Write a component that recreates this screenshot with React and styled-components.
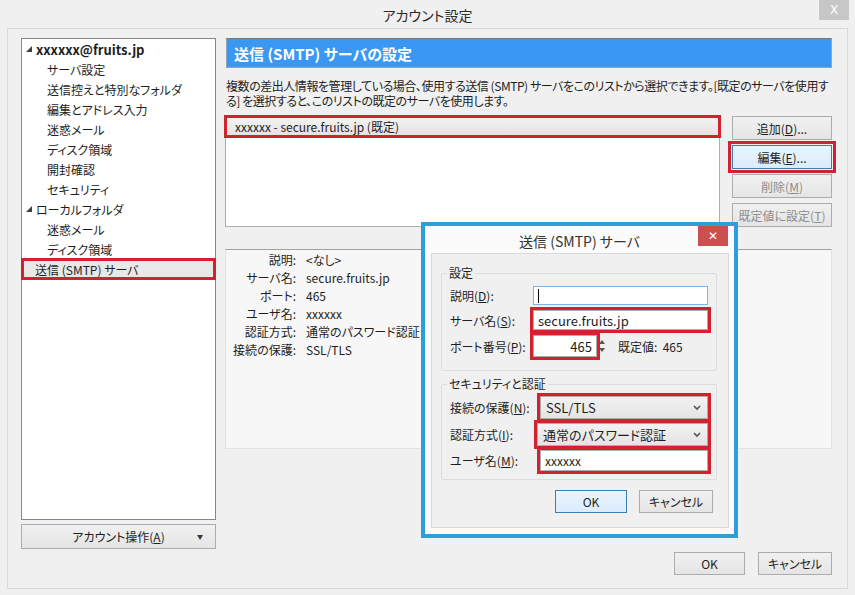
import styled, { createGlobalStyle } from "styled-components";

const GlobalStyle = createGlobalStyle`
  html, body {
    margin: 0;
    padding: 0;
    background: #f0f0f0;
  }
  body {
    font-family: "Noto Sans CJK JP", "Noto Sans", sans-serif;
    font-size: 12px;
    color: #1e1e1e;
    font-feature-settings: "palt";
  }
  * { box-sizing: border-box; }
`;

const RED = "#d3222f";

const Window = styled.div`
  position: relative;
  width: 855px;
  height: 595px;
  background: #f0f0f0;
  display: flex;
  flex-direction: column;
  overflow: hidden;
`;

const TitleBar = styled.div`
  height: 28px;
  display: grid;
  grid-template-columns: 1fr auto 1fr;
  align-items: center;
`;

const WindowTitle = styled.div`
  font-size: 14px;
  color: #2b2b2b;
  padding-top: 2px;
`;

const CloseBox = styled.div`
  justify-self: end;
  align-self: start;
  width: 30px;
  height: 20px;
  margin-right: 6px;
  background: ${(p) => (p.$red ? "#c9504f" : "#c7c7c7")};
  color: #fff;
  display: flex;
  align-items: center;
  justify-content: center;
  font-size: 12px;
  font-family: "DejaVu Sans", sans-serif;
`;

const Frame = styled.div`
  flex: 1;
  margin: 0 7px 6px 7px;
  border: 1px solid #dadada;
  display: flex;
  gap: 10px;
  padding: 9px 15px 13px 13px;
`;

const LeftCol = styled.div`
  width: 195px;
  display: flex;
  flex-direction: column;
  gap: 4px;
  padding-bottom: 26px;
`;

const Tree = styled.div`
  flex: 1;
  background: #fff;
  border: 1px solid #828790;
`;

const TreeItem = styled.div`
  height: 20px;
  display: flex;
  align-items: center;
  padding-left: ${(p) => (p.$child ? "25px" : "4px")};
  font-weight: ${(p) => (p.$bold ? 700 : 400)};
  font-size: ${(p) => (p.$bold ? "13px" : "12px")};
  background: ${(p) => (p.$selected ? "#e8e8e8" : "transparent")};
  outline: ${(p) => (p.$selected ? `3px solid ${RED}` : "none")};
  outline-offset: -2px;
  gap: 4px;
  ${(p) => p.$selected && "padding-left: 13px;"}
`;

const Arrow = () => (
  <svg width="6" height="6" viewBox="0 0 6 6">
    <polygon points="6,0 6,6 0,6" fill="#404040" />
  </svg>
);

const Button = styled.div`
  height: ${(p) => p.$h || 24}px;
  width: ${(p) => (p.$w ? `${p.$w}px` : "auto")};
  border: 1px solid ${(p) => (p.$focus ? "#3c7fb1" : "#acacac")};
  background: ${(p) =>
    p.$focus
      ? "linear-gradient(#eaf4fc, #dcecfc)"
      : "linear-gradient(#f0f0f0, #e5e5e5)"};
  color: ${(p) => (p.$disabled ? "#8d8d8d" : "#1e1e1e")};
  display: flex;
  align-items: center;
  justify-content: center;
  font-size: 12px;
  position: relative;
  outline: ${(p) => (p.$mark ? `3px solid ${RED}` : "none")};
  outline-offset: 1px;
`;

const DropMark = styled.span`
  position: absolute;
  right: 12px;
  top: 7px;
  font-size: 6px;
  color: #333;
`;

const RightCol = styled.div`
  flex: 1;
  display: flex;
  flex-direction: column;
`;

const Header = styled.div`
  height: 30px;
  background: #3a98f2;
  border: 1px solid #8fa6bb;
  border-top-color: #7a7a7a;
  color: #fff;
  font-weight: 700;
  font-size: 15px;
  display: flex;
  align-items: center;
  padding-left: 7px;
`;

const Description = styled.p`
  margin: 10px 0 0 0;
  line-height: 15px;
  font-size: 12px;
  letter-spacing: -0.45px;
`;

const ListRow = styled.div`
  margin-top: 8px;
  display: flex;
  gap: 12px;
`;

const ServerList = styled.div`
  flex: 1;
  height: 111px;
  background: #fff;
  border: 1px solid #adadad;
  margin-left: -1px;
`;

const ServerItem = styled.div`
  height: 19px;
  display: flex;
  align-items: center;
  padding-left: 9px;
  background: linear-gradient(#f4f4f4, #e2e2e2);
  outline: 3px solid ${RED};
  outline-offset: -1px;
`;

const ButtonStack = styled.div`
  width: 100px;
  display: flex;
  flex-direction: column;
  gap: 5px;
`;

const Details = styled.div`
  margin-top: 22px;
  margin-left: -1px;
  height: 200px;
  background: #f7f7f7;
  border-top: 1px solid #a0a0a0;
  border-left: 1px solid #e3e3e3;
  border-right: 1px solid #e3e3e3;
  border-bottom: 1px solid #e3e3e3;
  display: grid;
  grid-template-columns: 70px 1fr;
  grid-auto-rows: 18px;
  column-gap: 10px;
  padding-top: 1px;
  align-content: start;
`;

const DLabel = styled.div`
  text-align: right;
  line-height: 18px;
`;

const DValue = styled.div`
  line-height: 18px;
`;

const Footer = styled.div`
  margin-top: auto;
  display: flex;
  justify-content: flex-end;
  gap: 13px;
`;

/* ---- modal ---- */

const Modal = styled.div`
  position: absolute;
  left: 421px;
  top: 222px;
  width: 317px;
  height: 316px;
  border: 4px solid #2ba0d8;
  background: #fbfbfb;
  display: flex;
  flex-direction: column;
`;

const ModalTitleBar = styled.div`
  height: 27px;
  display: grid;
  grid-template-columns: 1fr auto 1fr;
  align-items: center;
`;

const ModalTitle = styled.div`
  font-size: 14px;
  color: #333;
  padding-top: 2px;
`;

const ModalBody = styled.div`
  flex: 1;
  margin: 0 5px 6px 6px;
  background: #f0f0f0;
  border: 1px solid #dadada;
  padding: 12px 11px 0 9px;
  display: flex;
  flex-direction: column;
`;

const Group = styled.fieldset`
  margin: 0;
  border: 1px solid #dcdcdc;
  border-radius: 2px;
  padding: ${(p) => p.$pad};
  display: grid;
  grid-template-columns: ${(p) => p.$label}px 1fr;
  align-items: center;
  row-gap: ${(p) => p.$gap}px;
  & + & {
    margin-top: 6px;
  }
`;

const Legend = styled.legend`
  padding: 0 2px;
  margin-left: -3px;
  font-size: 12px;
  line-height: 14px;
`;

const FieldLabel = styled.label`
  font-size: 12px;
`;

const TextBox = styled.div`
  height: ${(p) => p.$h || 19}px;
  width: ${(p) => (p.$w ? `${p.$w}px` : "auto")};
  background: #fff;
  border: 1px solid ${(p) => (p.$focus ? "#7eb4ea" : "#abadb3")};
  display: flex;
  align-items: center;
  justify-content: ${(p) => (p.$right ? "flex-end" : "flex-start")};
  padding: 0 4px;
  font-size: ${(p) => (p.$big ? "13px" : "12px")};
  outline: ${(p) => (p.$mark ? `3px solid ${RED}` : "none")};
  outline-offset: 0px;
`;

const Caret = styled.span`
  width: 1px;
  height: 14px;
  background: #000;
`;

const PortRow = styled.div`
  display: flex;
  align-items: center;
`;

const Spinner = () => (
  <svg width="8" height="20" viewBox="0 0 8 20" style={{ marginLeft: 1 }}>
    <polygon points="4,4 7,8 1,8" fill="#555" />
    <polygon points="1,12 7,12 4,16" fill="#555" />
  </svg>
);

const DefaultPort = styled.span`
  margin-left: 12px;
  font-size: 12px;
`;

const Select = styled.div`
  height: 23px;
  background: linear-gradient(#f2f2f2, #e4e4e4);
  border: 1px solid #acacac;
  display: flex;
  align-items: center;
  justify-content: space-between;
  padding: 0 6px 0 5px;
  font-size: 13px;
  outline: 3px solid ${RED};
  outline-offset: 0px;
  margin-left: ${(p) => (p.$shift ? "-3px" : "0")};
`;

const Chevron = () => (
  <svg width="8" height="6" viewBox="0 0 8 6">
    <polyline points="1,1 4,4 7,1" fill="none" stroke="#555" strokeWidth="1.6" />
  </svg>
);

const ModalButtons = styled.div`
  margin-top: 10px;
  display: flex;
  justify-content: flex-end;
  gap: 12px;
  padding-right: 4px;
`;

const details = [
  ["説明:", "<なし>"],
  ["サーバ名:", "secure.fruits.jp"],
  ["ポート:", "465"],
  ["ユーザ名:", "xxxxxx"],
  ["認証方式:", "通常のパスワード認証"],
  ["接続の保護:", "SSL/TLS"],
];

export default function App() {
  return (
    <Window>
      <GlobalStyle />
      <TitleBar>
        <span />
        <WindowTitle>アカウント設定</WindowTitle>
        <CloseBox>X</CloseBox>
      </TitleBar>
      <Frame>
        <LeftCol>
          <Tree>
            <TreeItem $bold>
              <Arrow />
              xxxxxx@fruits.jp
            </TreeItem>
            <TreeItem $child>サーバ設定</TreeItem>
            <TreeItem $child>送信控えと特別なフォルダ</TreeItem>
            <TreeItem $child>編集とアドレス入力</TreeItem>
            <TreeItem $child>迷惑メール</TreeItem>
            <TreeItem $child>ディスク領域</TreeItem>
            <TreeItem $child>開封確認</TreeItem>
            <TreeItem $child>セキュリティ</TreeItem>
            <TreeItem>
              <Arrow />
              ローカルフォルダ
            </TreeItem>
            <TreeItem $child>迷惑メール</TreeItem>
            <TreeItem $child>ディスク領域</TreeItem>
            <TreeItem $selected>送信 (SMTP) サーバ</TreeItem>
          </Tree>
          <Button $h={25}>
            アカウント操作(<u>A</u>)<DropMark>▼</DropMark>
          </Button>
        </LeftCol>
        <RightCol>
          <Header>送信 (SMTP) サーバの設定</Header>
          <Description>
            複数の差出人情報を管理している場合、使用する送信 (SMTP)
            サーバをこのリストから選択できます。[既定のサーバを使用する]
            を選択すると、このリストの既定のサーバを使用します。
          </Description>
          <ListRow>
            <ServerList>
              <ServerItem>xxxxxx - secure.fruits.jp (既定)</ServerItem>
            </ServerList>
            <ButtonStack>
              <Button>
                追加(<u>D</u>)...
              </Button>
              <Button $focus $mark>
                編集(<u>E</u>)...
              </Button>
              <Button $disabled>
                削除(<u>M</u>)
              </Button>
              <Button $disabled>
                既定値に設定(<u>T</u>)
              </Button>
            </ButtonStack>
          </ListRow>
          <Details>
            {details.map(([k, v]) => (
              <>
                <DLabel key={k}>{k}</DLabel>
                <DValue key={k + "v"}>{v}</DValue>
              </>
            ))}
          </Details>
          <Footer>
            <Button $w={71} $h={23}>
              OK
            </Button>
            <Button $w={74} $h={23}>
              キャンセル
            </Button>
          </Footer>
        </RightCol>
      </Frame>

      <Modal>
        <ModalTitleBar>
          <span />
          <ModalTitle>送信 (SMTP) サーバ</ModalTitle>
          <CloseBox $red>✕</CloseBox>
        </ModalTitleBar>
        <ModalBody>
          <Group $label={83} $gap={5} $pad="6px 8px 13px 8px">
            <Legend>設定</Legend>
            <FieldLabel>
              説明(<u>D</u>):
            </FieldLabel>
            <TextBox $focus>
              <Caret />
            </TextBox>
            <FieldLabel>
              サーバ名(<u>S</u>):
            </FieldLabel>
            <TextBox $mark $big $h={20}>
              secure.fruits.jp
            </TextBox>
            <FieldLabel>
              ポート番号(<u>P</u>):
            </FieldLabel>
            <PortRow>
              <TextBox $mark $right $w={64} $h={22} $big>
                465
              </TextBox>
              <Spinner />
              <DefaultPort>既定値:&nbsp;&nbsp;465</DefaultPort>
            </PortRow>
          </Group>
          <Group $label={90} $gap={4} $pad="5px 8px 8px 8px">
            <Legend>セキュリティと認証</Legend>
            <FieldLabel>
              接続の保護(<u>N</u>):
            </FieldLabel>
            <Select>
              SSL/TLS
              <Chevron />
            </Select>
            <FieldLabel>
              認証方式(<u>I</u>):
            </FieldLabel>
            <Select $shift>
              通常のパスワード認証
              <Chevron />
            </Select>
            <FieldLabel>
              ユーザ名(<u>M</u>):
            </FieldLabel>
            <TextBox $mark $h={21}>
              xxxxxx
            </TextBox>
          </Group>
          <ModalButtons>
            <Button $w={72} $h={23} $focus>
              OK
            </Button>
            <Button $w={74} $h={23}>
              キャンセル
            </Button>
          </ModalButtons>
        </ModalBody>
      </Modal>
    </Window>
  );
}
